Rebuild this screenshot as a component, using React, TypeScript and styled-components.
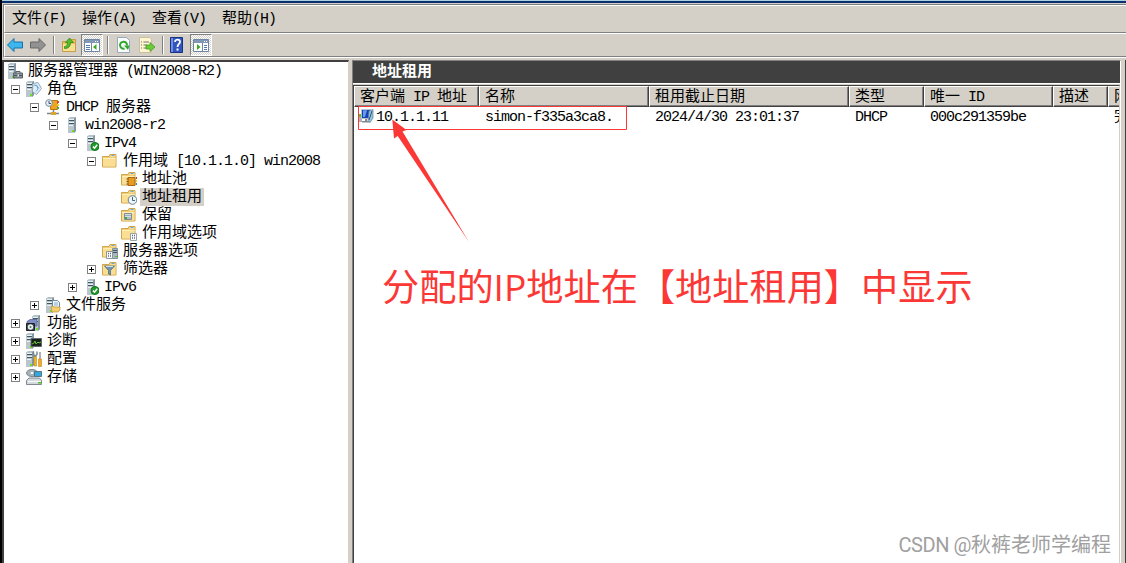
import React from 'react';
import styled, { createGlobalStyle, css } from 'styled-components';

const FACE = '#d4d0c8';
const SHADOW = '#808080';
const DARK = '#404040';
const MARK = '#fc3836';

const GlobalStyle = createGlobalStyle`
  * {
    box-sizing: border-box;
  }
  body {
    margin: 0;
    overflow: hidden;
    background: ${FACE};
  }
`;

const Window = styled.div`
  position: relative;
  display: flex;
  flex-direction: column;
  width: 1126px;
  height: 563px;
  overflow: hidden;
  background: ${FACE};
  border-left: 2px solid #000;
  color: #000;
  font-family: 'Liberation Mono', 'Noto Sans CJK SC', monospace;
  font-size: 15px;
  line-height: 18px;
`;

const TitleEdge = styled.div`
  flex: none;
  height: 4px;
  border-top: 1px solid #a9d0dc;
  border-bottom: 1px solid ${FACE};
  background: #0a2f6f;
`;

const Bars = styled.div`
  flex: none;
  margin-left: 1px;
  border-top: 1px solid ${SHADOW};
  border-left: 1px solid ${SHADOW};
  border-bottom: 1px solid #fff;
  height: 54px;
`;

const MenuBar = styled.div`
  display: flex;
  gap: 16px;
  height: 28px;
  padding: 5px 0 0 7px;
  border-top: 1px solid #fff;
  border-left: 1px solid #fff;
  border-bottom: 1px solid ${SHADOW};
`;

const ToolBar = styled.div`
  display: flex;
  align-items: center;
  height: 24px;
  border-top: 1px solid #fff;
  border-left: 1px solid #fff;
  border-bottom: 1px solid ${SHADOW};
`;

const ToolButton = styled.div<{ $pressed?: boolean }>`
  display: flex;
  align-items: center;
  justify-content: center;
  width: 23px;
  height: 22px;

  &:first-child {
    margin-left: -2px;
  }

  ${({ $pressed }) =>
    $pressed &&
    css`
      width: 22px;
      margin-left: 1px;
      border: 1px solid ${SHADOW};
      border-right-color: #fff;
      border-bottom-color: #fff;
      background: repeating-conic-gradient(#fff 0 25%, ${FACE} 0 50%) 0 0 / 2px
        2px;
    `}
`;

const Divider = styled.div<{ $after?: number }>`
  width: 2px;
  height: 18px;
  margin: 0 ${({ $after = 2 }) => $after}px 0 4px;
  border-left: 1px solid ${SHADOW};
  border-right: 1px solid #fff;
`;

const Body = styled.div`
  display: flex;
  flex: 1;
  min-height: 0;
  padding-top: 2px;
`;

const TreePane = styled.div`
  width: 347px;
  border-top: 2px solid ${DARK};
  border-left: 2px solid ${DARK};
  border-right: 1px solid ${FACE};
  background: #fff;
`;

const TreeRow = styled.div<{ $level: number }>`
  display: flex;
  align-items: center;
  height: 18px;
  padding-left: ${({ $level }) => ($level ? 7 + ($level - 1) * 19 : 3)}px;
`;

const ToggleSlot = styled.div`
  width: 15px;
  height: 11px;
  padding-top: 1px;
`;

const Toggle = styled.svg`
  display: block;
  width: 9px;
  height: 9px;
`;

const TreeLabel = styled.span<{ $selected?: boolean }>`
  height: 18px;
  margin-left: 3px;
  padding: 1px 2px 0;
  background: ${({ $selected }) => ($selected ? FACE : 'transparent')};
`;

const Line = styled.span`
  white-space: pre;
`;

const Latin = styled.span`
  letter-spacing: -1px;
`;

const ResultPane = styled.div`
  display: flex;
  flex-direction: column;
  width: 769px;
  margin-left: 3px;
  border-top: 1px solid ${SHADOW};
  border-left: 1px solid ${SHADOW};
  border-right: 1px solid #fff;
`;

const PaneTitle = styled.div`
  flex: none;
  height: 23px;
  padding: 3px 0 0 19px;
  border-bottom: 1px solid #fff;
  background: ${DARK};
  color: #fff;
  font-weight: 700;
`;

const List = styled.div`
  flex: 1;
  margin-top: 1px;
  overflow: hidden;
  border-top: 1px solid ${DARK};
  border-left: 1px solid ${DARK};
  border-right: 1px solid ${FACE};
  background: #fff;
`;

const Row = styled.div`
  display: flex;
  width: 830px;
`;

const HeaderCell = styled.div<{ $width: number }>`
  flex: none;
  width: ${({ $width }) => $width}px;
  height: 21px;
  padding: 2px 0 0 5px;
  border-top: 1px solid #fff;
  border-left: 1px solid #fff;
  border-right: 1px solid ${DARK};
  border-bottom: 1px solid ${DARK};
  box-shadow: inset -1px -1px 0 ${SHADOW};
  background: ${FACE};
`;

const Cell = styled.div<{ $width: number }>`
  display: flex;
  flex: none;
  align-items: flex-start;
  width: ${({ $width }) => $width}px;
  height: 21px;
  padding: 2px 0 0 6px;
`;

const ClientCell = styled(Cell)`
  gap: 1px;
  padding-left: 5px;
`;

const FarEdge = styled.div`
  width: 3px;
  margin-left: auto;
  border-right: 1px solid ${DARK};
`;

const Overlay = styled.svg`
  position: absolute;
  top: 0;
  left: -2px;
`;

const Note = styled.div`
  position: absolute;
  top: 260px;
  left: 380px;
  color: ${MARK};
  font-family: 'Open Sans', 'Noto Sans CJK SC', sans-serif;
  font-size: 37.2px;
  line-height: 54px;
  white-space: nowrap;
`;

const Watermark = styled.div`
  position: absolute;
  right: 15px;
  bottom: 3px;
  color: #a0a0a0;
  font-family: 'Noto Sans CJK SC', sans-serif;
  font-size: 20px;
  line-height: 30px;
  white-space: nowrap;
`;

const WatermarkLatin = styled.span`
  font-family: Roboto, sans-serif;
  letter-spacing: -0.45px;
`;

// Latin runs are half-width, 8px per character, beside 15px ideographs.
const Text = ({ children }: { children: string }) => (
  <Line>
    {(children.match(/[\x20-\x7e]+|[^\x20-\x7e]+/g) ?? []).map((run, i) =>
      /^[\x20-\x7e]/.test(run) ? <Latin key={i}>{run}</Latin> : run
    )}
  </Line>
);

const Svg = ({ children }: { children: React.ReactNode }) => (
  <svg width="16" height="16" viewBox="0 0 16 16">
    {children}
  </svg>
);

const Tower = ({ x = 1 }: { x?: number }) => (
  <g transform={`translate(${x} 0)`}>
    <path d="M0 1.500 2 0h6v14l-2 2H0z" fill="#b4c1c7" />
    <path d="M0 1h6v15H0z" fill="#b9c6cc" />
    <path d="M6 1.500 8 0v14l-2 2z" fill="#84969f" />
    <path d="M1 3.500h5M1 6.500h5" stroke="#3f5663" />
    <path d="M1 2.500h5M1 5.500h5M1 8.500h4" stroke="#eaf1f4" />
    <path d="M4 13h2v2H4z" fill="#6be01f" />
  </g>
);

const Folder = () => (
  <g transform="translate(-.5 0)">
    <path d="M1 3.500h6.500l1-2h6v12.500H1z" fill="#f1cd76" stroke="#d1a54b" />
    <path d="M1.500 5H14v8.500H1.500z" fill="#f9de94" />
    <path d="M1.500 5.500H14M9 3h5" stroke="#fff0b8" />
    <path d="M10 2.500h3" stroke="#64a9db" />
  </g>
);

const icons: Record<string, React.ReactNode> = {
  root: (
    <>
      <Tower x={1} />
      <path d="M9 10V8.500h4V10" fill="none" stroke="#58646b" />
      <path d="M6.500 10h9v5h-9z" fill="#87939a" stroke="#58646b" />
      <path d="M7 12.500h8" stroke="#4a555b" />
      <path d="M10.500 11.500H12v2h-1.500z" fill="#e5e9eb" />
    </>
  ),
  roles: (
    <>
      <Tower x={0} />
      <path d="m7 2.500 5-1 3.500 6-5 6-4-3z" fill="#e3eff8" stroke="#8fa8ba" />
      <path d="m8 4 3 1 1 3-2 2.500M10 3.500l3 4" fill="none" stroke="#6aa5d6" />
    </>
  ),
  dhcp: (
    <>
      <path d="M5.500 1.500h7v9h-7z" fill="#eea421" stroke="#b97713" />
      <path d="M12 2h2v2h-2z" fill="#d9432a" />
      <path d="M12 5h2v2h-2z" fill="#f4d21e" />
      <path d="M12 8h2v2h-2z" fill="#4ba83e" />
      <circle cx="4" cy="4" r="3.400" fill="#e4edf3" stroke="#7c909d" />
      <path d="M4 2v2.500h2" fill="none" stroke="#38556b" />
      <path d="M8.500 11v3M2 14.500h12" stroke="#77858c" strokeWidth="1.500" />
      <path d="M6 13h5v3H6z" fill="#dca52e" />
    </>
  ),
  server: <Tower x={4} />,
  ip: (
    <>
      <Tower x={4} />
      <circle cx="12" cy="11.500" r="4" fill="#219b2b" stroke="#11721a" />
      <path
        d="m10 11.500 1.500 1.700 2.700-3.500"
        fill="none"
        stroke="#fff"
        strokeWidth="1.400"
      />
    </>
  ),
  folder: <Folder />,
  pool: (
    <>
      <Folder />
      <path d="M7 6.500h7v8H7z" fill="#e69b22" stroke="#a76a10" />
      <path d="M5.500 8h2M5.500 10.500h2M5.500 13h2" stroke="#7b5518" />
      <path d="M15 6h1v2h-1z" fill="#d73825" />
      <path d="M15 9h1v2h-1z" fill="#f2cf20" />
      <path d="M15 12h1v2h-1z" fill="#3e83c3" />
    </>
  ),
  leases: (
    <>
      <Folder />
      <circle cx="11.500" cy="11" r="4.300" fill="#eef5fa" stroke="#68808f" />
      <path d="M11.500 8v3.500H14" fill="none" stroke="#3f647f" />
    </>
  ),
  reserved: (
    <>
      <Folder />
      <path d="M3.500 6.500h7v6h-7z" fill="#e9eef0" stroke="#7f8d94" />
      <path
        d="M4.500 8.500h1M6.500 8.500h1M8.500 8.500h1M6.500 11h1M8.500 11h1"
        stroke="#526b82"
        strokeWidth="1.500"
      />
      <path d="M4 10h2v2H4z" fill="#42aa38" />
    </>
  ),
  options: (
    <>
      <Folder />
      <path d="M9.500 8.500h6v7h-6z" fill="#fafafa" stroke="#9aa0a5" />
      <path
        d="M11 10.500h1M13 10.500h1M11 13h1M13 13h1"
        stroke="#596d84"
        strokeWidth="1.500"
      />
    </>
  ),
  serverOptions: (
    <>
      <Folder />
      <path d="M10.500 5.500h5v10h-5z" fill="#a9b7be" stroke="#7f909a" />
      <path d="M11 7.500h4M11 9.500h4" stroke="#3f5663" />
      <path d="M4.500 8.500h6v7h-6z" fill="#fafafa" stroke="#8d979e" />
      <path
        d="M6 10.500h1M8 10.500h1M6 13h1M8 13h1"
        stroke="#596d84"
        strokeWidth="1.500"
      />
      <path d="M13 13h2v1h-2z" fill="#4bc51a" />
    </>
  ),
  filters: (
    <>
      <Folder />
      <path
        d="M2.500 5h10l-4 4.500V14l-2-1V9.500z"
        fill="#7195b1"
        stroke="#41667f"
        strokeWidth=".7"
      />
      <path d="M4 5.500h7" stroke="#d2e2ed" />
    </>
  ),
  files: (
    <>
      <Tower />
      <path d="M7.500 3.500h5l2 2v6h-7z" fill="#f3f8fc" stroke="#718998" />
      <path d="M9 6h4M9 8h4" stroke="#76a9d2" />
      <path
        d="m6 10 2-1 1 1h6v3l-2 2H7z"
        fill="#f3cf72"
        stroke="#c18d29"
        strokeWidth=".7"
      />
    </>
  ),
  features: (
    <>
      <Tower x={6} />
      <path
        d="M1 6.500 4 4.500h7V11H1z"
        fill="#7f8dc4"
        stroke="#4d5a8a"
        strokeWidth=".7"
      />
      <path d="M.5 8.500h8v7h-8z" fill="#3b464f" stroke="#1d2226" />
      <circle cx="4.500" cy="12" r="2.700" fill="#edf1f3" />
      <circle cx="4.500" cy="12" r="1" fill="#4c7d56" />
    </>
  ),
  diagnostics: (
    <>
      <Tower x={0} />
      <path d="M5 5.500h10.500v8H5z" fill="#17221b" stroke="#606a6c" />
      <path
        d="m6 11 2-1 1-2 1 3 2-2 1 1 2-1"
        fill="none"
        stroke="#69bc31"
      />
    </>
  ),
  config: (
    <>
      <Tower x={0} />
      <path
        d="M8 5.500h2.500V15H8z"
        fill="#efb925"
        stroke="#a87812"
        strokeWidth=".5"
      />
      <path
        d="M7.500.5v3l1.700 1.500L11 3.500v-3"
        fill="none"
        stroke="#73838c"
        strokeWidth="1.400"
      />
      <path d="M14 1v7" stroke="#8e999e" strokeWidth="1.500" />
      <path
        d="M12.500 8h3v7.500h-3z"
        fill="#f2ab22"
        stroke="#b97713"
        strokeWidth=".5"
      />
    </>
  ),
  storage: (
    <>
      <path
        d="M.5 11.500 3 9h10.500l2 2.500v4H.5z"
        fill="#d3d9dc"
        stroke="#657078"
        strokeWidth=".8"
      />
      <path d="M2 12.500h13" stroke="#f9fafa" />
      <ellipse
        cx="6"
        cy="4"
        rx="5.500"
        ry="3.600"
        fill="#a6b1b7"
        stroke="#66757d"
        strokeWidth=".8"
      />
      <ellipse cx="6" cy="4" rx="1.500" ry="1" fill="#fff" />
      <path
        d="M8.500 2.500h7v5h-7z"
        fill="#35a7dc"
        stroke="#47606f"
        strokeWidth=".8"
      />
      <path d="M12 13h3v1.500h-3z" fill="#48c520" />
    </>
  ),
  client: (
    <>
      <path d="M0 6h3v7H0z" fill="#aab2b7" />
      <path d="M0 5h2v3H0z" fill="#45c82e" />
      <path d="M2.500.5h9v9h-9z" fill="#1542b8" stroke="#bac2c9" />
      <path d="m4 1.500 4-.5-2 7H4z" fill="#6c98ea" />
      <path d="M6 10h2v2H6zM3 12h8v1.500H3z" fill="#7f8a92" />
      <path
        d="m10 2 4-1.500V9l-3 4.500-2-2z"
        fill="#9ac2dd"
        stroke="#577c96"
        strokeWidth=".7"
      />
      <path d="m13 2-3 9" stroke="#285c87" />
    </>
  ),
  back: (
    <path
      d="M.5 8 7 1.500V5h8.500v6H7v3.500z"
      fill="#3db5ed"
      stroke="#1971a8"
    />
  ),
  forward: (
    <path d="M15.500 8 9 1.500V5H.5v6H9v3.500z" fill="#929292" stroke="#666" />
  ),
  up: (
    <>
      <path
        d="M1.500 4.500h5l1-2h7v12h-13z"
        fill="#e8c05e"
        stroke="#c59d45"
      />
      <path d="M2 7h12v7H2z" fill="#f8df94" />
      <path
        d="M3.500 9.500c2.500 0 3-2 3-4h-2L8.500 1l4 4.500h-3c0 4-2 6-6 6z"
        fill="#55bd27"
        stroke="#278415"
        strokeWidth=".7"
      />
    </>
  ),
  tree: (
    <>
      <path d="M.5 2.500h15v12H.5z" fill="#fff" stroke="#6e86a4" />
      <path d="M1 3h14v3H1z" fill="#8097b5" />
      <path d="M11 4.500h1M13 4.500h1" stroke="#fff" />
      <path d="M2 8.500h4M2 10.500h4M2 12.500h4" stroke="#577ba8" />
      <path d="M7.500 6v8" stroke="#6e86a4" />
      <path d="M12.500 7v6L9 10z" fill="#37a91e" />
    </>
  ),
  refresh: (
    <>
      <path d="M1.500.5h9l3 3v12h-12z" fill="#f8fafc" stroke="#97a9bb" />
      <path
        d="M8.500 11.500a3.500 3.500 0 1 1 2.500-3"
        fill="none"
        stroke="#31a82a"
        strokeWidth="2"
      />
      <path d="M8 8.500h5.500L12 13z" fill="#31a82a" />
    </>
  ),
  exportList: (
    <>
      <path d="M.5.5h10l2 2v13H.5z" fill="#fff5cf" stroke="#c9c0a0" />
      <path
        d="M2 5h1M2 8h1M2 11h1M4.500 5H10M4.500 8H8M4.500 11H8"
        stroke="#73777a"
      />
      <path
        d="M7 8h4V5.500l5 4.500-5 4.500V12H7z"
        fill="#6ccc35"
        stroke="#3b941c"
        strokeWidth=".7"
      />
    </>
  ),
  help: (
    <>
      <path d="M.5.5h12v15H.5z" fill="#3155bd" stroke="#1a3282" />
      <path d="M1 1h2v14H1z" fill="#6f91e3" />
      <path
        d="M5 5c0-3.500 5.500-3 5 0-.3 2-2.500 2-2.500 5"
        fill="none"
        stroke="#fff"
        strokeWidth="1.800"
      />
      <path d="M6.500 11.500h2v2h-2z" fill="#fff" />
    </>
  ),
  pane: (
    <>
      <path d="M.5 2.500h15v12H.5z" fill="#fff" stroke="#6e86a4" />
      <path d="M1 3h14v3H1z" fill="#8097b5" />
      <path d="M11 4.500h1M13 4.500h1" stroke="#fff" />
      <path d="M9.500 6v8" stroke="#6e86a4" />
      <path d="M11 8.500h3M11 10.500h3M11 12.500h3" stroke="#577ba8" />
      <path d="M4 7v6l3.500-3z" fill="#37a91e" />
    </>
  ),
};

const Icon = ({ name }: { name: string }) => <Svg>{icons[name]}</Svg>;

interface TreeNode {
  level: number;
  icon: string;
  label: string;
  toggle?: '+' | '-';
  selected?: boolean;
}

const nodes: TreeNode[] = [
  { level: 0, icon: 'root', label: '服务器管理器 (WIN2008-R2)' },
  { level: 1, icon: 'roles', label: '角色', toggle: '-' },
  { level: 2, icon: 'dhcp', label: 'DHCP 服务器', toggle: '-' },
  { level: 3, icon: 'server', label: 'win2008-r2', toggle: '-' },
  { level: 4, icon: 'ip', label: 'IPv4', toggle: '-' },
  { level: 5, icon: 'folder', label: '作用域 [10.1.1.0] win2008', toggle: '-' },
  { level: 6, icon: 'pool', label: '地址池' },
  { level: 6, icon: 'leases', label: '地址租用', selected: true },
  { level: 6, icon: 'reserved', label: '保留' },
  { level: 6, icon: 'options', label: '作用域选项' },
  { level: 5, icon: 'serverOptions', label: '服务器选项' },
  { level: 5, icon: 'filters', label: '筛选器', toggle: '+' },
  { level: 4, icon: 'ip', label: 'IPv6', toggle: '+' },
  { level: 2, icon: 'files', label: '文件服务', toggle: '+' },
  { level: 1, icon: 'features', label: '功能', toggle: '+' },
  { level: 1, icon: 'diagnostics', label: '诊断', toggle: '+' },
  { level: 1, icon: 'config', label: '配置', toggle: '+' },
  { level: 1, icon: 'storage', label: '存储', toggle: '+' },
];

const columns = [
  { title: '客户端 IP 地址', width: 125, value: '10.1.1.11' },
  { title: '名称', width: 170, value: 'simon-f335a3ca8.' },
  { title: '租用截止日期', width: 200, value: '2024/4/30 23:01:37' },
  { title: '类型', width: 75, value: 'DHCP' },
  { title: '唯一 ID', width: 129, value: '000c291359be' },
  { title: '描述', width: 55, value: '' },
  { title: '网', width: 76, value: '完' },
];

const menus = ['文件(F)', '操作(A)', '查看(V)', '帮助(H)'];

const App = () => (
  <>
    <GlobalStyle />
    <Window>
      <TitleEdge />
      <Bars>
        <MenuBar>
          {menus.map((menu) => (
            <Text key={menu}>{menu}</Text>
          ))}
        </MenuBar>
        <ToolBar>
          <ToolButton>
            <Icon name="back" />
          </ToolButton>
          <ToolButton>
            <Icon name="forward" />
          </ToolButton>
          <Divider />
          <ToolButton>
            <Icon name="up" />
          </ToolButton>
          <ToolButton $pressed>
            <Icon name="tree" />
          </ToolButton>
          <Divider $after={3} />
          <ToolButton>
            <Icon name="refresh" />
          </ToolButton>
          <ToolButton>
            <Icon name="exportList" />
          </ToolButton>
          <Divider />
          <ToolButton>
            <Icon name="help" />
          </ToolButton>
          <ToolButton $pressed>
            <Icon name="pane" />
          </ToolButton>
        </ToolBar>
      </Bars>
      <Body>
        <TreePane>
          {nodes.map(({ level, icon, label, toggle, selected }) => (
            <TreeRow key={label} $level={level}>
              {level > 0 && (
                <ToggleSlot>
                  {toggle && (
                    <Toggle viewBox="0 0 9 9" shapeRendering="crispEdges">
                      <path d="M.5.5h8v8h-8z" fill="#fff" stroke="#808080" />
                      <path
                        d={toggle === '+' ? 'M2 4.500h5M4.500 2v5' : 'M2 4.500h5'}
                        stroke="#000"
                      />
                    </Toggle>
                  )}
                </ToggleSlot>
              )}
              <Icon name={icon} />
              <TreeLabel $selected={selected}>
                <Text>{label}</Text>
              </TreeLabel>
            </TreeRow>
          ))}
        </TreePane>
        <ResultPane>
          <PaneTitle>地址租用</PaneTitle>
          <List>
            <Row>
              {columns.map(({ title, width }) => (
                <HeaderCell key={title} $width={width}>
                  <Text>{title}</Text>
                </HeaderCell>
              ))}
            </Row>
            <Row>
              {columns.map(({ title, width, value }, i) =>
                i === 0 ? (
                  <ClientCell key={title} $width={width}>
                    <Icon name="client" />
                    <Text>{value}</Text>
                  </ClientCell>
                ) : (
                  <Cell key={title} $width={width}>
                    <Text>{value}</Text>
                  </Cell>
                )
              )}
            </Row>
          </List>
        </ResultPane>
        <FarEdge />
      </Body>
      <Overlay width="1126" height="563">
        <path d="M358.500 106.500h268v23h-268z" fill="none" stroke={MARK} />
        <path
          d="M392.300 119.500 406.500 130l-4 1.500L469 242l-71.300-106-3.700 2.500z"
          fill={MARK}
        />
      </Overlay>
      <Note>分配的IP地址在【地址租用】中显示</Note>
      <Watermark>
        <WatermarkLatin>CSDN @</WatermarkLatin>秋裤老师学编程
      </Watermark>
    </Window>
  </>
);

export default App;
